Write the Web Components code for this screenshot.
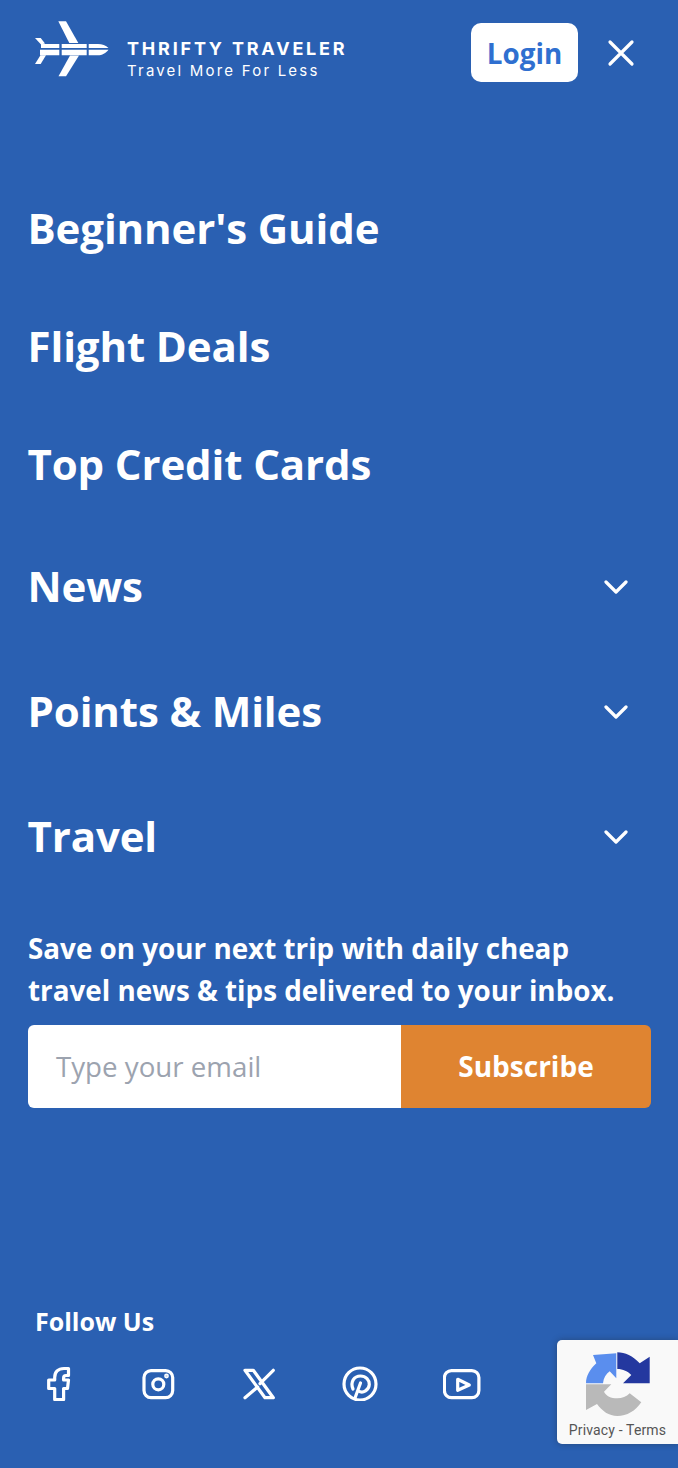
<!DOCTYPE html>
<html lang="en">
<head>
<meta charset="utf-8">
<title>Thrifty Traveler</title>
<style>
  html, body { margin: 0; padding: 0; background: #2a60b2; }
  body { font-family: "Open Sans", "Liberation Sans", sans-serif; }
</style>
</head>
<body>
<menu-page></menu-page>

<script>
class siteHeader extends HTMLElement {
  constructor() {
    super();
    this.attachShadow({mode:"open"});
    this.shadowRoot.innerHTML = `
      <style>
        :host { display:flex; align-items:flex-start; height:82px; padding-top:20px; box-sizing:content-box; }
        .plane { width:76px; height:58px; margin-left:34px; flex:none; }
        .brand { margin-left:17px; margin-top:18px; color:#fff; font-family:"Inter", sans-serif; flex:none; width:240px; }
        .name { font-size:18px; line-height:22px; font-weight:700; letter-spacing:2.8px; white-space:nowrap; }
        .tag { font-size:15px; line-height:18px; letter-spacing:2.2px; margin-top:2px; white-space:nowrap; }
        .login { margin-left:auto; margin-top:3px; width:107px; height:59px; border-radius:10px; background:#fff; color:#2f6fd0;
                 font-size:27.800px; font-weight:700; display:flex; align-items:center; justify-content:center; box-sizing:border-box; }
        .close { width:28px; height:28px; margin:19px 43px 0 29px; flex:none; }
      </style>
      <svg class="plane" viewBox="0 0 76 58" fill="#fff">
        <path d="M24.300 1.300H32L44.300 23H35.300z"/>
        <path d="M24.500 56.300H32L45 35.500H36z"/>
        <path d="M1 18H6.700L11 23.500 7 24.500z"/>
        <path d="M1 44H6.700L12 35.300H6.500z"/>
        <path d="M7 24H25.300V28H7zM27.700 24H52.700V28H27.700zM54.700 24H64C68 24 72 25.500 74.500 28H54.700z"/>
        <path d="M6 29.700H25.300V35.300H6zM27.700 29.700H52.700V35.300H27.700zM54.700 29.700H74.500C72 33 68 35.300 64 35.300H54.700z"/>
      </svg>
      <div class="brand">
        <div class="name">THRIFTY TRAVELER</div>
        <div class="tag">Travel More For Less</div>
      </div>
      <div class="login">Login</div>
      <svg class="close" viewBox="0 0 28 28" fill="none" stroke="#fff" stroke-width="3.200" stroke-linecap="round">
        <path d="M3 3l22 22M25 3L3 25"/>
      </svg>
    `
  }
}
window.customElements.define("site-header", siteHeader);

class navItem extends HTMLElement {
  constructor() {
    super();
    this.attachShadow({mode:"open"});
    const more = this.hasAttribute("more");
    this.shadowRoot.innerHTML = `
      <style>
        :host { display:flex; align-items:center; justify-content:space-between; color:#fff; padding:0 50px 0 27.500px; }
        .label { font-size:42px; font-weight:700; line-height:58px; letter-spacing:-.12px; white-space:nowrap; }
        svg { width:24px; height:14px; flex:none; margin-top:2px; }
      </style>
      <span class="label"><slot></slot></span>
      ${
        more ? `<svg viewBox="0 0 24 14" fill="none" stroke="#fff" stroke-width="3.200" stroke-linecap="round" stroke-linejoin="round"><path d="M2 2l10 10L22 2"/></svg>` : ""
      }
    `
  }
}
window.customElements.define("nav-item", navItem);

class subscribeForm extends HTMLElement {
  constructor() {
    super();
    this.attachShadow({mode:"open"});
    this.shadowRoot.innerHTML = `
      <style>
        :host { display:block; padding:0 27px 0 28px; color:#fff; }
        p { margin:0; font-size:27.800px; line-height:41.500px; font-weight:700; white-space:nowrap; }
        .row { display:flex; height:83px; margin-top:14px; border-radius:6px; overflow:hidden; }
        .email { width:373px; flex:none; background:#fff; color:#9ca3af; font-size:27.700px; display:flex; align-items:center; padding:0 0 2px 28px; box-sizing:border-box; }
        .btn { flex:1; background:#df8431; font-size:28px; font-weight:700; display:flex; align-items:center; justify-content:center; padding-bottom:2px; box-sizing:border-box; }
      </style>
      <p><slot></slot></p>
      <div class="row">
        <div class="email">Type your email</div>
        <div class="btn">Subscribe</div>
      </div>
    `
  }
}
window.customElements.define("subscribe-form", subscribeForm);

class socialLinks extends HTMLElement {
  constructor() {
    super();
    this.attachShadow({mode:"open"});
    const icons = [
      `<path d="M29.500 3.500H25C19 3.500 15.700 7 15.700 12.500V15H9.700V23.500H15.700V34.600H24.600V23.500H28.500L29.500 15H24.600V13C24.600 11.500 25.500 10.500 27 10.500H29.500Z"/>`,
      `<rect x="4" y="5.600" width="28.700" height="27" rx="7"/><circle cx="18.300" cy="19.300" r="5.500"/><circle cx="26.500" cy="11" r=".8" fill="#fff"/>`,
      `<path d="M4 5.300H12.300L32.300 32.700H24ZM32.300 5.300L19 18.700M16.700 22L4 32.700"/>`,
      `<circle cx="18" cy="19" r="16"/><path d="M11 24C8 17 12 11 18.500 11C24 11 27.500 15 27.300 19.500C27 25 21 29 16.500 26M18.500 18L13 33"/>`,
      `<rect x="1.400" y="5.600" width="34.500" height="27" rx="7"/><path d="M14.700 14.300L26.300 20L14.700 25.300Z"/>`
    ];
    this.shadowRoot.innerHTML = `
      <style>
        :host { display:block; padding-left:35px; color:#fff; }
        h3 { margin:0; font-size:25px; line-height:34px; font-weight:700; }
        .icons { display:flex; margin-top:27px; margin-left:4px; }
        .icon { width:101px; height:36px; flex:none; }
        svg { display:block; height:36px; width:40px; fill:none; stroke:#fff; stroke-width:3.200; stroke-linejoin:round; stroke-linecap:round; }
      </style>
      <h3>Follow Us</h3>
      <div class="icons">
        ${
          icons.map((o) => {
            return `<div class="icon"><svg viewBox="0 0 40 36">${o}</svg></div>`
          }).join('')
        }
      </div>
    `
  }
}
window.customElements.define("social-links", socialLinks);

class recaptchaBadge extends HTMLElement {
  constructor() {
    super();
    this.attachShadow({mode:"open"});
    this.shadowRoot.innerHTML = `
      <style>
        :host { position:absolute; left:557px; top:1340px; width:121px; height:104px; background:#f9f9f9; border-radius:5px 0 0 5px;
                box-shadow:0 0 6px rgba(30,30,30,.35); display:block; overflow:hidden; }
        svg { display:block; width:68px; height:66px; margin:11px 0 0 28px; filter:blur(.4px); }
        .links { position:absolute; left:0; right:0; top:81px; text-align:center; font-family:Roboto, sans-serif; font-size:14px; letter-spacing:.15px; line-height:18px; color:#555; white-space:nowrap; }
      </style>
      <svg viewBox="0 0 68 66">
        <path fill="#24389f" d="M32.300 1.300C40 1.300 48 5 54.700 12.300L64.700 5.700V32.300H38L46.300 24C43 20.500 38 18 32.300 18Z"/>
        <path fill="#5a8eee" d="M8 4L31.300 2.300V27.300L24.700 20.300C21 23 18.500 27 18 32.300H1C1 25 5 18 11.300 12.300Z"/>
        <path fill="#b9b9b9" d="M1 33.300H26.300L19 40.700C21 45 26 47.300 32.300 47.300C37 47.300 41.500 45.500 44.700 42.300L56.300 51.300C50.500 60 42 65 32.300 65C24 65 17 60 12 53L1 59Z"/>
      </svg>
      <div class="links">Privacy - Terms</div>
    `
  }
}
window.customElements.define("recaptcha-badge", recaptchaBadge);

class menuPage extends HTMLElement {
  constructor() {
    super();
    this.attachShadow({mode:"open"});
    this.shadowRoot.innerHTML = `
      <style>
        :host { display:block; position:relative; width:678px; height:1468px; background:#2a60b2; overflow:hidden; }
        nav { display:flex; flex-direction:column; margin-top:97px; }
        .links { display:flex; flex-direction:column; gap:60px; }
        .more { display:flex; flex-direction:column; gap:67px; margin-top:64px; }
        subscribe-form { margin-top:63px; }
        social-links { margin-top:196px; }
      </style>
      <site-header></site-header>
      <nav>
        <div class="links">
          <nav-item>Beginner's Guide</nav-item>
          <nav-item>Flight Deals</nav-item>
          <nav-item>Top Credit Cards</nav-item>
        </div>
        <div class="more">
          <nav-item more>News</nav-item>
          <nav-item more>Points &amp; Miles</nav-item>
          <nav-item more>Travel</nav-item>
        </div>
      </nav>
      <subscribe-form>Save on your next trip with daily cheap<br>travel news &amp; tips delivered to your inbox.</subscribe-form>
      <social-links></social-links>
      <recaptcha-badge></recaptcha-badge>
    `
  }
}
window.customElements.define("menu-page", menuPage);
</script>
</body>
</html>
